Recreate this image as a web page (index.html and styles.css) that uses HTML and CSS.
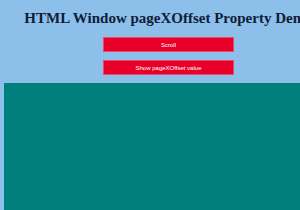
FILE: index.html
```html
<!DOCTYPE html>
<html lang="en">
<head>
  <meta charset="UTF-8" />
  <title>HTML Window pageXOffset Property</title>
  <link rel="stylesheet" href="styles.css">
</head>
<body>
  <div class="page">
    <h1 class="title">HTML Window pageXOffset Property Demo</h1>
    <button class="btn" onclick="scrollIt()">Scroll</button>
    <button class="btn" onclick="showOffset()">Show pageXOffset value</button>
  </div>
  <div class="scroll-box"></div>

  <script>
    function scrollIt() {
      window.scrollBy(100, 0);
    }
    function showOffset() {
      alert("pageXOffset: " + window.pageXOffset);
    }
  </script>
</body>
</html>
```

FILE: styles.css
```css
html, body {
  overflow: hidden;
}

body {
  margin: 0 0 0 4px;
  background: #8cbfea;
  font-family: 'Liberation Serif', serif;
}

.page {
  width: 329px;
  display: flex;
  flex-direction: column;
  align-items: center;
  gap: 8px;
  padding-bottom: 8px;
}

.title {
  font-size: 15px;
  font-weight: bold;
  color: #0f1c38;
  margin: 9px 0 2px;
  white-space: nowrap;
  line-height: 18px;
}

.btn {
  width: 131px;
  height: 15px;
  padding: 0;
  background: #e8002a;
  border: 1px solid #f0456a;
  color: #fff;
  font-family: 'Liberation Sans', Arial, sans-serif;
  font-size: 6px;
  cursor: pointer;
}

.scroll-box {
  width: 2000px;
  height: 200px;
  background: #00807c;
}
```
